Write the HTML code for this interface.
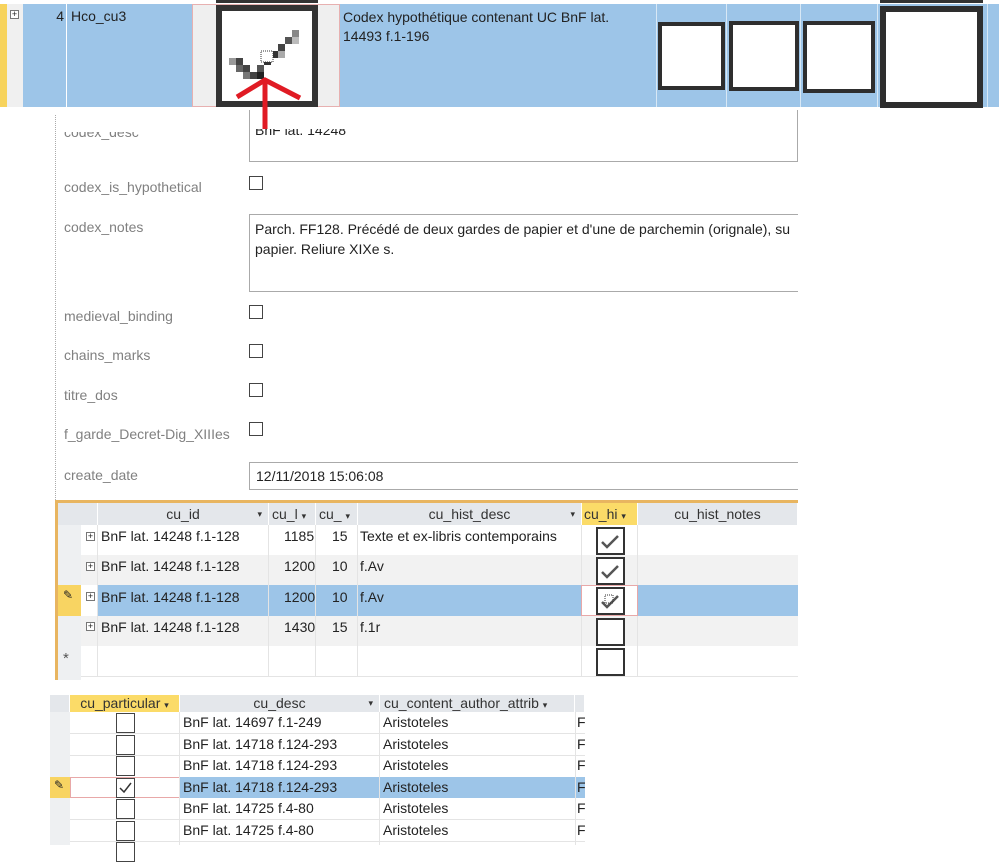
<!DOCTYPE html>
<html><head><meta charset="utf-8"><style>
body{margin:0;width:999px;height:845px;overflow:hidden;background:#fff;font-family:"Liberation Sans",sans-serif;font-size:14px;color:#222;position:relative}
div{position:absolute;box-sizing:border-box}
.lbl{color:#808080;font-size:14px;left:64px}
.tb{border:1px solid #aaa;background:#fff;padding:4px 5px;font-size:14px}
.cb{width:14px;height:14px;border:1px solid #444;background:#fff}
.h{background:#e4e7eb;border-right:1px solid #fff;text-align:center;font-size:14px;color:#333;line-height:22px}
.pl{width:9px;height:9px;border:1px solid #777;font-size:9px;line-height:7px;text-align:center;background:#fff}
.bx{border:2px solid #333;background:#fff}
</style></head><body>
<!-- top band -->
<div style="left:0;top:4px;width:999px;height:103px;background:#9dc5e8"></div>
<div style="left:0;top:4px;width:7px;height:103px;background:#f7d35c"></div>
<div style="left:7px;top:4px;width:16px;height:103px;background:#f0f0f0"></div>
<div class="pl" style="left:10px;top:10px">+</div>
<div style="left:66px;top:4px;width:1px;height:103px;background:#fff"></div>
<div style="left:192px;top:4px;width:148px;height:103px;background:#efefef;border:1px solid #e7b0b0"></div>
<div style="left:216px;top:5px;width:102px;height:102px;border:6px solid #333;background:#fff"></div>
<div style="left:216px;top:0;width:102px;height:3px;background:#333"></div>
<div style="left:880px;top:0;width:103px;height:3px;background:#333"></div>
<div style="left:30px;top:8px;width:34px;text-align:right;font-size:14px">4</div>
<div style="left:71px;top:8px;font-size:14px">Hco_cu3</div>
<div style="left:343px;top:8px;font-size:14px;line-height:19px;width:310px">Codex hypothétique contenant UC BnF lat.<br>14493 f.1-196</div>
<div style="left:656px;top:4px;width:1px;height:103px;background:#d8e8f5"></div>
<div style="left:726px;top:4px;width:1px;height:103px;background:#d8e8f5"></div>
<div style="left:800px;top:4px;width:1px;height:103px;background:#d8e8f5"></div>
<div style="left:877px;top:4px;width:1px;height:103px;background:#d8e8f5"></div>
<div style="left:987px;top:4px;width:1px;height:103px;background:#d8e8f5"></div>
<div style="left:658px;top:22px;width:67px;height:68px;border:4px solid #2e2e2e;background:#fff"></div>
<div style="left:729px;top:21px;width:70px;height:70px;border:4px solid #2e2e2e;background:#fff"></div>
<div style="left:803px;top:21px;width:72px;height:72px;border:4px solid #2e2e2e;background:#fff"></div>
<div style="left:880px;top:6px;width:103px;height:102px;border:6px solid #2e2e2e;background:#fff"></div>
<svg style="position:absolute;left:0;top:0" width="999" height="140">
<g fill="#444">
<rect x="229" y="58" width="7" height="7" fill="#999"/><rect x="236" y="58" width="7" height="7"/>
<rect x="236" y="65" width="7" height="7" fill="#666"/><rect x="243" y="65" width="7" height="7"/>
<rect x="243" y="72" width="7" height="7" fill="#777"/><rect x="250" y="72" width="7" height="7"/>
<rect x="257" y="72" width="7" height="7" fill="#222"/><rect x="257" y="65" width="7" height="7" fill="#555"/>
<rect x="264" y="58" width="7" height="7" fill="#333"/><rect x="271" y="51" width="7" height="7" fill="#333"/>
<rect x="278" y="44" width="7" height="7" fill="#444"/><rect x="285" y="37" width="7" height="7" fill="#555"/>
<rect x="292" y="30" width="7" height="7" fill="#888"/><rect x="278" y="51" width="7" height="7" fill="#aaa"/>
<rect x="292" y="37" width="7" height="7" fill="#bbb"/>
</g>
<rect x="261" y="51" width="12" height="11" fill="#fff" stroke="#333" stroke-dasharray="1,1"/>
<path d="M265 82 L265 132 M237 97 L265 80 L300 98" stroke="#e01b24" stroke-width="5" fill="none"/>
</svg>
<!-- form -->
<div style="left:55px;top:115px;width:0;height:385px;border-left:1px dotted #aaa"></div>
<div class="lbl" style="top:124px;clip-path:inset(8px 0 0 0)">codex_desc</div>
<div class="tb" style="left:249px;top:110px;width:549px;height:52px;border-top:none;padding-top:12px;clip-path:inset(19px 0 0 0)">BnF lat. 14248</div>
<div class="tb" style="left:249px;top:110px;width:549px;height:52px;border-top:none;background:transparent"></div>
<div class="lbl" style="top:179px">codex_is_hypothetical</div><div class="cb" style="left:249px;top:176px"></div>
<div class="lbl" style="top:219px">codex_notes</div>
<div class="tb" style="left:249px;top:214px;width:549px;height:78px;line-height:20px;white-space:nowrap;overflow:hidden;border-right:none">Parch. FF128. Précédé de deux gardes de papier et d'une de parchemin (orignale), su<br>papier. Reliure XIXe s.</div>
<div class="lbl" style="top:308px">medieval_binding</div><div class="cb" style="left:249px;top:305px"></div>
<div class="lbl" style="top:347px">chains_marks</div><div class="cb" style="left:249px;top:344px"></div>
<div class="lbl" style="top:387px">titre_dos</div><div class="cb" style="left:249px;top:383px"></div>
<div class="lbl" style="top:426px">f_garde_Decret-Dig_XIIIes</div><div class="cb" style="left:249px;top:422px"></div>
<div class="lbl" style="top:467px">create_date</div>
<div class="tb" style="left:249px;top:462px;width:549px;height:28px;padding:5px 6px;border-right:none">12/11/2018 15:06:08</div>
<!-- subform 1 -->
<div style="left:55px;top:500px;width:743px;height:180px;border-left:3px solid #e8b560;border-top:3px solid #e8b560"></div>
<div class="h" style="left:58px;top:503px;width:40px;height:22px;background:#e4e7eb"></div>
<div class="h" style="left:98px;top:503px;width:171px;height:22px">cu_id<span style="position:absolute;right:6px;font-size:9px">▾</span></div>
<div class="h" style="left:269px;top:503px;width:47px;height:22px;text-align:left;padding-left:3px">cu_l <span style="font-size:9px">▾</span></div>
<div class="h" style="left:316px;top:503px;width:42px;height:22px;text-align:left;padding-left:3px">cu_ <span style="font-size:9px">▾</span></div>
<div class="h" style="left:358px;top:503px;width:224px;height:22px">cu_hist_desc<span style="position:absolute;right:6px;font-size:9px">▾</span></div>
<div class="h" style="left:582px;top:503px;width:56px;height:22px;background:#fbdb68;text-align:left;padding-left:2px">cu_hi <span style="font-size:9px">▾</span></div>
<div class="h" style="left:638px;top:503px;width:160px;height:22px">cu_hist_notes</div>
<div style="left:58px;top:525px;width:23px;height:155px;background:#eef0f2"></div>
<div style="left:58px;top:585px;width:23px;height:31px;background:#f8d462"></div>
<div style="left:63px;top:588px;font-size:12px">✎</div>
<div style="left:63px;top:650px;font-size:15px;color:#555">*</div>
<div style="left:81px;top:555px;width:717px;height:30px;background:#f2f2f2"></div>
<div style="left:98px;top:585px;width:700px;height:31px;background:#9dc5e8"></div>
<div style="left:81px;top:616px;width:717px;height:30px;background:#f2f2f2"></div>
<div style="left:81px;top:676px;width:717px;height:1px;background:#e4e4e4"></div>
<div style="left:268px;top:525px;width:1px;height:152px;background:#e4e4e4"></div>
<div style="left:315px;top:525px;width:1px;height:152px;background:#e4e4e4"></div>
<div style="left:357px;top:525px;width:1px;height:152px;background:#e4e4e4"></div>
<div style="left:581px;top:525px;width:1px;height:152px;background:#e4e4e4"></div>
<div style="left:637px;top:525px;width:1px;height:152px;background:#e4e4e4"></div>
<div style="left:97px;top:525px;width:1px;height:152px;background:#e4e4e4"></div>
<div class="pl" style="left:86px;top:532px">+</div><div class="pl" style="left:86px;top:562px">+</div><div class="pl" style="left:86px;top:592px">+</div><div class="pl" style="left:86px;top:622px">+</div>
<div style="left:101px;top:528px">BnF lat. 14248 f.1-128</div><div style="left:284px;top:528px">1185</div><div style="left:332px;top:528px">15</div><div style="left:360px;top:528px">Texte et ex-libris contemporains</div>
<div style="left:101px;top:558px">BnF lat. 14248 f.1-128</div><div style="left:284px;top:558px">1200</div><div style="left:332px;top:558px">10</div><div style="left:360px;top:558px">f.Av</div>
<div style="left:101px;top:589px">BnF lat. 14248 f.1-128</div><div style="left:284px;top:589px">1200</div><div style="left:332px;top:589px">10</div><div style="left:360px;top:589px">f.Av</div>
<div style="left:101px;top:619px">BnF lat. 14248 f.1-128</div><div style="left:284px;top:619px">1430</div><div style="left:332px;top:619px">15</div><div style="left:360px;top:619px">f.1r</div>
<div style="left:581px;top:585px;width:57px;height:31px;border:1px solid #e8a8a8;background:#fff"></div>
<div class="bx" style="left:596px;top:527px;width:29px;height:28px"></div>
<div class="bx" style="left:596px;top:557px;width:29px;height:28px"></div>
<div class="bx" style="left:596px;top:587px;width:29px;height:28px"></div>
<div class="bx" style="left:596px;top:618px;width:29px;height:28px"></div>
<div class="bx" style="left:596px;top:648px;width:29px;height:28px"></div>
<svg style="position:absolute;left:596px;top:527px" width="30" height="90"><path d="M6 15 L11 20 L22 9 M6 45 L11 50 L22 39 M6 75 L11 80 L22 69" stroke="#555" stroke-width="2.5" fill="none"/><rect x="9" y="68" width="8" height="8" fill="none" stroke="#333" stroke-dasharray="1,1"/></svg>
<!-- subform 2 -->
<div class="h" style="left:50px;top:695px;width:20px;height:17px;line-height:17px"></div>
<div class="h" style="left:70px;top:695px;width:110px;height:17px;line-height:16px;background:#fbdb68">cu_particular <span style="font-size:9px">▾</span></div>
<div class="h" style="left:180px;top:695px;width:200px;height:17px;line-height:16px">cu_desc<span style="position:absolute;right:6px;font-size:9px">▾</span></div>
<div class="h" style="left:380px;top:695px;width:195px;height:17px;line-height:16px;text-align:left;padding-left:4px">cu_content_author_attrib <span style="font-size:9px">▾</span></div>
<div class="h" style="left:575px;top:695px;width:10px;height:17px"></div>
<div style="left:50px;top:712px;width:20px;height:133px;background:#eef0f2"></div>
<div style="left:50px;top:777px;width:20px;height:21px;background:#f8d462"></div>
<div style="left:54px;top:778px;font-size:12px">✎</div>
<div style="left:180px;top:777px;width:405px;height:21px;background:#9dc5e8"></div>
<div style="left:70px;top:777px;width:110px;height:21px;border:1px solid #e8a8a8"></div>
<div style="left:70px;top:733px;width:515px;height:1px;background:#e4e4e4"></div>
<div style="left:70px;top:755px;width:515px;height:1px;background:#e4e4e4"></div>
<div style="left:70px;top:819px;width:515px;height:1px;background:#e4e4e4"></div>
<div style="left:70px;top:841px;width:515px;height:1px;background:#e4e4e4"></div>
<div style="left:179px;top:712px;width:1px;height:133px;background:#e4e4e4"></div>
<div style="left:379px;top:712px;width:1px;height:133px;background:#e4e4e4"></div>
<div style="left:575px;top:712px;width:1px;height:133px;background:#e4e4e4"></div>
<div class="cb" style="left:116px;top:713px;width:19px;height:20px"></div>
<div class="cb" style="left:116px;top:735px;width:19px;height:20px"></div>
<div class="cb" style="left:116px;top:756px;width:19px;height:20px"></div>
<div class="cb" style="left:116px;top:778px;width:19px;height:20px"></div>
<div class="cb" style="left:116px;top:799px;width:19px;height:20px"></div>
<div class="cb" style="left:116px;top:821px;width:19px;height:20px"></div>
<div class="cb" style="left:116px;top:842px;width:19px;height:20px"></div>
<svg style="position:absolute;left:116px;top:778px" width="19" height="20"><path d="M4 10 L8 14 L15 5" stroke="#333" stroke-width="1.5" fill="none"/></svg>
<div style="left:183px;top:714px">BnF lat. 14697 f.1-249</div><div style="left:383px;top:714px">Aristoteles</div><div style="left:577px;top:714px">F</div>
<div style="left:183px;top:736px">BnF lat. 14718 f.124-293</div><div style="left:383px;top:736px">Aristoteles</div><div style="left:577px;top:736px">F</div>
<div style="left:183px;top:757px">BnF lat. 14718 f.124-293</div><div style="left:383px;top:757px">Aristoteles</div><div style="left:577px;top:757px">F</div>
<div style="left:183px;top:779px">BnF lat. 14718 f.124-293</div><div style="left:383px;top:779px">Aristoteles</div><div style="left:577px;top:779px">F</div>
<div style="left:183px;top:800px">BnF lat. 14725 f.4-80</div><div style="left:383px;top:800px">Aristoteles</div><div style="left:577px;top:800px">F</div>
<div style="left:183px;top:822px">BnF lat. 14725 f.4-80</div><div style="left:383px;top:822px">Aristoteles</div><div style="left:577px;top:822px">F</div>
</body></html>
